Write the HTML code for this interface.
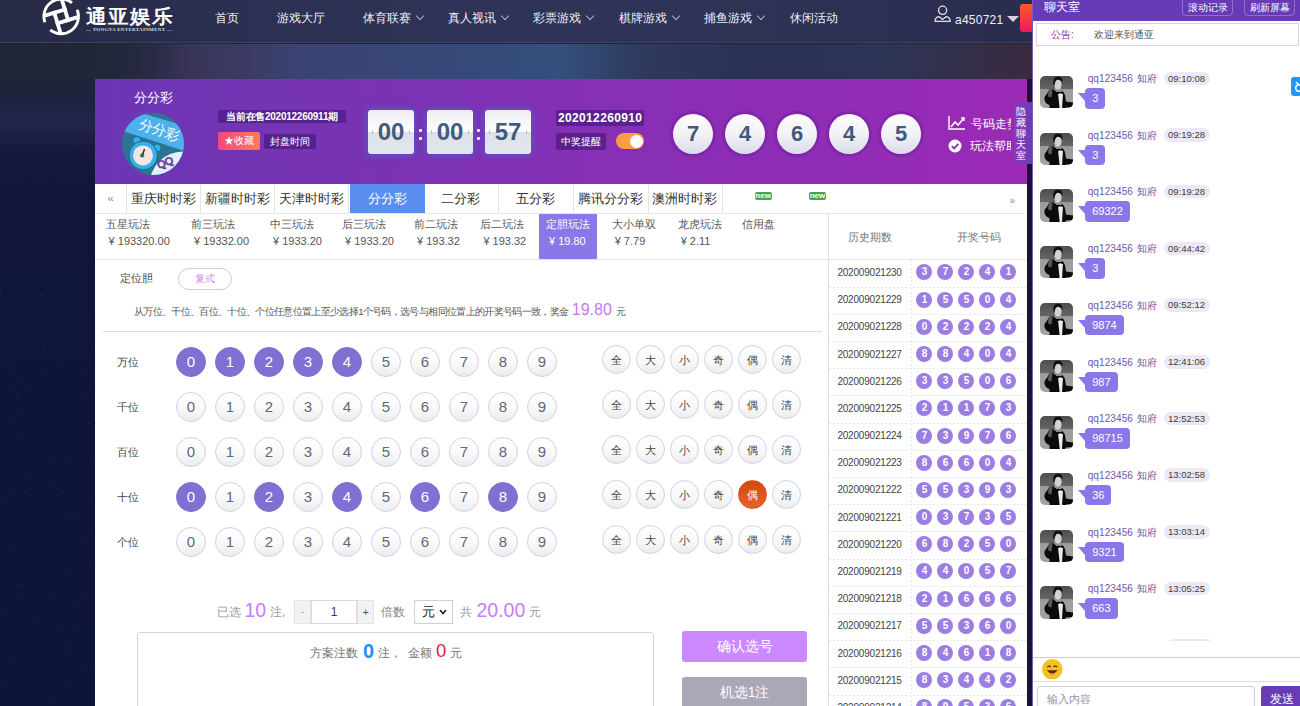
<!DOCTYPE html>
<html><head><meta charset="utf-8">
<style>
*{margin:0;padding:0;box-sizing:border-box}
html,body{width:1300px;height:706px;overflow:hidden}
body{position:relative;font-family:"Liberation Sans",sans-serif;background:#111640;color:#333}
.a{position:absolute}
#bg{left:0;top:43px;width:1032px;height:663px;background:linear-gradient(180deg,#1f2736 0px,#1f2638 30px,#1e2240 57px,#22264a 80px,#17193e 107px,#11153b 157px,#0f1539 357px,#0d1539 663px)}
#bgstrip{left:0;top:44px;width:1032px;height:35px;background:linear-gradient(90deg,#1f2736 0px,#202838 100px,#262a44 150px,#383456 185px,#3a3a62 240px,#3a4372 300px,#364878 450px,#34507c 560px,#2e3a5e 640px,#2a3152 760px,#2d3454 900px,#352d45 990px,#3b2a3e 1032px)}
#rstrip{left:1027px;top:79px;width:5px;height:627px;background:#1a1230}
#hdr{left:0;top:0;width:1032px;height:43px;background:linear-gradient(90deg,#262a45 0,#2b2f50 200px,#2e3357 450px,#2e3357 700px,#2b2d4d 1032px);border-bottom:1px solid #3b4064}
.nav{top:11px;font-size:12px;color:#eef0f8;line-height:14px;white-space:nowrap}
.chev{display:inline-block;width:6px;height:6px;border-right:1px solid #a9adc4;border-bottom:1px solid #a9adc4;transform:rotate(45deg);margin-left:6px;position:relative;top:-3px}
#panel{left:95px;top:79px;width:932px;height:627px;background:#fff}
#banner{left:0;top:0;width:932px;height:105px;background:linear-gradient(90deg,#6b36b4,#9b2ab5)}
.bdg{background:rgba(60,20,110,.55);color:#fff;font-size:10px;border-radius:2px;white-space:nowrap}
.cd{width:46px;height:44px;border-radius:3px;background:linear-gradient(180deg,#eeeef2 0,#fff 50%,#dde1ea 50%,#e2e6ee 100%);box-shadow:0 0 6px 2px rgba(70,110,200,.55);font-size:24px;font-weight:bold;color:#3f5b7e;text-align:center;line-height:44px}
.cd:before,.cd:after{content:"";position:absolute;top:20px;width:1px;height:4px;background:#b8bcc8}.cd:before{left:4px}.cd:after{right:4px}
.colon{width:3px;height:3px;background:#fff;border-radius:1px}
.ball{width:40px;height:40px;border-radius:50%;background:linear-gradient(180deg,#fdfdfe 0,#f2f2f7 50%,#dcdceb 100%);box-shadow:0 0 0 3px rgba(110,30,160,.45);font-size:22px;font-weight:bold;color:#3e5a7c;text-align:center;line-height:40px}
.tab{top:105px;height:29px;width:75.4px;border-right:1px solid #e4e4e4;font-size:13px;color:#333;text-align:center;line-height:29px;white-space:nowrap}
.sub{top:134px;height:46px;font-size:11px;color:#555;white-space:nowrap;line-height:17px}
.lab{font-size:11px;color:#444;line-height:14px;white-space:nowrap}
.nb{width:30px;height:30px;border-radius:50%;border:1px solid #cfd2e0;background:linear-gradient(180deg,#fff 0,#fafafa 50%,#ececef 100%);font-size:15px;color:#61677a;text-align:center;line-height:28px}
.nb.sel{background:#7f70d1;border-color:#7f70d1;color:#fff}
.qb{width:29px;height:29px;border-radius:50%;border:1px solid #cfd2e0;background:linear-gradient(180deg,#fff 0,#f8f8f8 60%,#ececef 100%);font-size:11px;color:#444;text-align:center;line-height:29.5px}
.qb.on{background:linear-gradient(180deg,#d24810,#e6622a);border-color:#d8521a;color:#fff}
.hl{left:0;width:198px;height:1px;background:repeating-linear-gradient(90deg,#e6e6e6 0 2px,transparent 2px 4px)}
.hp{left:8.4px;font-size:10px;color:#444;line-height:13px;letter-spacing:-.2px;white-space:nowrap}
.hb{width:16.1px;height:16.1px;border-radius:50%;background:#9c7de2;color:#fff;font-style:normal;font-weight:bold;font-size:10px;line-height:16.1px;text-align:center}
#chat{left:1032px;top:0;width:268px;height:706px;background:#fff;overflow:hidden}
#chat:after{content:"";position:absolute;left:0;top:0;width:1px;height:706px;background:#7b5cb5}
.cbtn{top:-3px;width:51px;height:18.7px;border:1px solid rgba(255,255,255,.28);border-radius:4px;color:#fff;font-size:10px;text-align:center;line-height:17px;padding-top:1px}
.av{left:8.4px;width:32.6px;height:32.4px;border-radius:5px;overflow:hidden}
.nm{left:55.7px;font-size:10px;color:#7058a8;line-height:12px;white-space:nowrap;letter-spacing:.1px}
.tm{left:131.5px;width:46px;height:13.5px;border-radius:7px;background:#ece8f6;font-size:9.5px;color:#3c3c3c;text-align:center;line-height:13.5px}
.bb{left:53.2px;height:20.6px;border-radius:4px;background:#8b77ea;color:#fff;font-size:11px;line-height:20.6px;padding:0 7px;white-space:nowrap}
.bb:before{content:"";position:absolute;left:-7px;top:5px;border-top:0 solid transparent;border-right:7px solid #8b77ea;border-bottom:8.5px solid transparent;width:0;height:0}
.bt{font-size:12px;line-height:14px;white-space:nowrap}
</style></head><body>
<div id="bg" class="a"></div>
<div id="bgstrip" class="a"></div>
<div id="rstrip" class="a"></div>
<div class="a" style="left:0;top:0;width:1px;height:1px;box-shadow:41px 294px 0 0 #2a386c,83px 189px 0 0 #1c2858,68px 236px 0 0 #243266,74px 199px 0 0 #1a2454,27px 178px 0 0 #1c2858,55px 568px 0 0 #1c2858,30px 232px 0 0 #1a2454,54px 200px 0 0 #1a2454,15px 368px 0 0 #1a2454,7px 546px 0 0 #1c2858,28px 187px 0 0 #1a2454,17px 436px 0 0 #2a386c,18px 693px 0 0 #1c2858,73px 455px 0 0 #1a2454,87px 325px 0 0 #1c2858,74px 332px 0 0 #243266,12px 700px 0 0 #1c2858,72px 201px 0 0 #1a2454,26px 648px 0 0 #1a2454,54px 461px 0 0 #2a386c,74px 604px 0 0 #243266,38px 394px 0 0 #202c5e,89px 389px 0 0 #1c2858,73px 447px 0 0 #1a2454,63px 491px 0 0 #2a386c,36px 214px 0 0 #1c2858,65px 568px 0 0 #202c5e,43px 295px 0 0 #2a386c,53px 180px 0 0 #1c2858,71px 461px 0 0 #243266,88px 498px 0 0 #1a2454,63px 607px 0 0 #1c2858,11px 416px 0 0 #2a386c,89px 206px 0 0 #1c2858,93px 457px 0 0 #1a2454,87px 596px 0 0 #243266,91px 535px 0 0 #243266,2px 612px 0 0 #243266,21px 259px 0 0 #2a386c,7px 363px 0 0 #243266,16px 393px 0 0 #2a386c,50px 648px 0 0 #1c2858,21px 599px 0 0 #2a386c,70px 424px 0 0 #202c5e,55px 703px 0 0 #243266,90px 565px 0 0 #243266,87px 529px 0 0 #202c5e,19px 224px 0 0 #202c5e,19px 377px 0 0 #202c5e,1px 636px 0 0 #1a2454,23px 409px 0 0 #243266,0px 289px 0 0 #2a386c,68px 518px 0 0 #1a2454,72px 466px 0 0 #202c5e,88px 667px 0 0 #1a2454,83px 195px 0 0 #2a386c,87px 541px 0 0 #2a386c,51px 543px 0 0 #1c2858,61px 550px 0 0 #1c2858,24px 208px 0 0 #202c5e,56px 306px 0 0 #1c2858,43px 193px 0 0 #1c2858,0px 294px 0 0 #1a2454,12px 512px 0 0 #1a2454,3px 212px 0 0 #202c5e,78px 525px 0 0 #202c5e,81px 398px 0 0 #243266,77px 512px 0 0 #2a386c,15px 258px 0 0 #2a386c,59px 631px 0 0 #2a386c,39px 227px 0 0 #202c5e,13px 490px 0 0 #243266,61px 305px 0 0 #1a2454,2px 350px 0 0 #1a2454,46px 290px 0 0 #1a2454,3px 680px 0 0 #243266,82px 233px 0 0 #243266,66px 515px 0 0 #202c5e,45px 368px 0 0 #1a2454,69px 654px 0 0 #243266,81px 368px 0 0 #1a2454,24px 385px 0 0 #2a386c,94px 372px 0 0 #202c5e,66px 644px 0 0 #243266,93px 169px 0 0 #1c2858,35px 623px 0 0 #243266,24px 492px 0 0 #2a386c,92px 497px 0 0 #243266,10px 365px 0 0 #1c2858,29px 621px 0 0 #202c5e,43px 349px 0 0 #2a386c,79px 141px 0 0 #2a386c,83px 492px 0 0 #1c2858,84px 262px 0 0 #2a386c,91px 344px 0 0 #2a386c,22px 584px 0 0 #243266,11px 545px 0 0 #2a386c,51px 226px 0 0 #202c5e,21px 270px 0 0 #1c2858,19px 616px 0 0 #202c5e,78px 625px 0 0 #243266,19px 701px 0 0 #1a2454,16px 161px 0 0 #1c2858,92px 245px 0 0 #1a2454,17px 584px 0 0 #202c5e,27px 168px 0 0 #243266,27px 439px 0 0 #1a2454,30px 473px 0 0 #243266,69px 569px 0 0 #202c5e,7px 502px 0 0 #2a386c,84px 669px 0 0 #2a386c,64px 273px 0 0 #1a2454,19px 676px 0 0 #1a2454,2px 590px 0 0 #202c5e,77px 144px 0 0 #202c5e,22px 284px 0 0 #2a386c,79px 263px 0 0 #1a2454,7px 473px 0 0 #1a2454,67px 634px 0 0 #1c2858,71px 198px 0 0 #202c5e,24px 423px 0 0 #1c2858,12px 659px 0 0 #2a386c,71px 168px 0 0 #1c2858,56px 473px 0 0 #1a2454,64px 664px 0 0 #202c5e,88px 423px 0 0 #2a386c,65px 686px 0 0 #2a386c,64px 393px 0 0 #1a2454,33px 347px 0 0 #2a386c,17px 566px 0 0 #1c2858,50px 592px 0 0 #243266,9px 386px 0 0 #2a386c,9px 357px 0 0 #243266,15px 298px 0 0 #243266,18px 399px 0 0 #202c5e,59px 364px 0 0 #1c2858,50px 638px 0 0 #202c5e,85px 369px 0 0 #202c5e,90px 581px 0 0 #1a2454,51px 487px 0 0 #2a386c"></div>
<div id="hdr" class="a">
  <svg class="a" style="left:38px;top:0" width="50" height="40" viewBox="0 0 50 40">
    <g stroke="#fff" fill="none" stroke-width="2.9">
    <path d="M6.94 22.32 A17.3 17.3 0 0 1 33.97 2.86"/>
    <path d="M39.19 9.81 A17.3 17.3 0 0 1 12.22 29.77"/>
    <g transform="translate(23.2 16.4) rotate(-17)" stroke-width="3.8">
      <path d="M-15.5 -5.5 L7.4 -5.5"/><path d="M5.5 -17 L5.5 7.4"/><path d="M-7.4 5.5 L15.5 5.5"/><path d="M-5.5 -7.4 L-5.5 17"/>
    </g></g>
  </svg>
  <div class="a" style="left:86px;top:4px;font-size:21px;font-weight:bold;color:#fff;letter-spacing:1px;line-height:24px;transform:scaleY(.92);transform-origin:0 100%">通亚娱乐</div>
  <div class="a" style="left:86px;top:27px;font-size:5px;color:#ddd;letter-spacing:.3px;font-family:'Liberation Serif',serif;font-weight:bold">— TONGYA ENTERTAINMENT —</div>
  <div class="a nav" style="left:215px">首页</div>
  <div class="a nav" style="left:277px">游戏大厅</div>
  <div class="a nav" style="left:363px">体育联赛<i class="chev"></i></div>
  <div class="a nav" style="left:448px">真人视讯<i class="chev"></i></div>
  <div class="a nav" style="left:533px">彩票游戏<i class="chev"></i></div>
  <div class="a nav" style="left:619px">棋牌游戏<i class="chev"></i></div>
  <div class="a nav" style="left:704px">捕鱼游戏<i class="chev"></i></div>
  <div class="a nav" style="left:790px">休闲活动</div>
  <svg class="a" style="left:934px;top:4px" width="18" height="19" viewBox="0 0 18 19"><circle cx="8.6" cy="6.3" r="4.1" stroke="#dfe2ee" stroke-width="1.3" fill="none"/><path d="M1 17.4 Q1 13.2 5 12.6 L8.6 15.4 L12.2 12.6 Q16.2 13.2 16.2 17.4 Z" stroke="#dfe2ee" stroke-width="1.3" fill="none" stroke-linejoin="round"/></svg>
  <div class="a" style="left:955px;top:12.5px;font-size:12px;letter-spacing:.25px;color:#eef0f8;line-height:14px">a450721</div>
  <div class="a" style="left:1007px;top:15.5px;width:0;height:0;border-left:6px solid transparent;border-right:6px solid transparent;border-top:6.8px solid #d4d4dc"></div>
  <div class="a" style="left:1020px;top:4px;width:20px;height:28px;border-radius:3px;background:linear-gradient(180deg,#ff5a1e,#ec1a5e)"></div>
</div>

<div id="panel" class="a">
  <div id="banner" class="a">
    <div class="a" style="left:39px;top:12px;font-size:12.5px;color:#fff;line-height:15px">分分彩</div>
    <div class="a" style="left:27.2px;top:33.5px;width:62px;height:62px;border-radius:50%;overflow:hidden;background:#2b7592">
      <svg width="62" height="62" viewBox="0 0 62 62">
        <rect width="62" height="62" fill="#2b7592"/>
        <polygon points="-2,-6 64,13 64,38.5 -2,17" fill="#4db1ee"/>
        <text x="0" y="0" font-size="14" fill="#fff" font-family="Liberation Sans" transform="translate(15.5 14.5) rotate(19)">分分彩</text>
        <circle cx="61" cy="72" r="33.5" fill="#e3f1fb"/>
        <text x="0" y="0" font-size="10.5" fill="none" stroke="#6b3a9a" stroke-width=".9" font-family="Liberation Sans" transform="translate(37 56) rotate(-22)">QQ</text>
        <circle cx="14.8" cy="27.5" r="4" fill="#36b0ea" stroke="#1d5f86" stroke-width=".8"/>
        <circle cx="35" cy="35" r="4" fill="#36b0ea" stroke="#1d5f86" stroke-width=".8"/>
        <circle cx="21.3" cy="42.4" r="14.3" fill="#36b0ea" stroke="#1d5f86" stroke-width=".9"/>
        <circle cx="21" cy="42.4" r="10" fill="#f2e6e2"/>
        <path d="M20.2 42.4 L22.6 36" stroke="#4a2020" stroke-width="1.5"/>
        <circle cx="20.2" cy="42.4" r="1.8" fill="#1e8a4a" stroke="#4a2020" stroke-width=".5"/>
      </svg>
    </div>
    <div class="a bdg" style="left:123px;top:31px;width:128px;height:13px;line-height:13px;padding-left:8px;font-weight:bold;letter-spacing:-.25px">当前在售202012260911期</div>
    <div class="a" style="left:123px;top:53px;width:42px;height:18px;border-radius:2px;background:linear-gradient(90deg,#f3497e,#fe7a58);color:#fff;font-size:10px;line-height:18px;padding-left:6px;white-space:nowrap">★收藏</div>
    <div class="a bdg" style="left:169px;top:55px;width:52px;height:15px;line-height:15px;text-align:center">封盘时间</div>
    <div class="a cd" style="left:273px;top:31px">00</div>
    <div class="a colon" style="left:323.5px;top:50px"></div><div class="a colon" style="left:323.5px;top:58px"></div>
    <div class="a cd" style="left:332px;top:31px">00</div>
    <div class="a colon" style="left:381.5px;top:50px"></div><div class="a colon" style="left:381.5px;top:58px"></div>
    <div class="a cd" style="left:390px;top:31px">57</div>
    <div class="a bdg" style="left:461px;top:31px;width:88px;height:16px;line-height:16px;font-size:12px;font-weight:bold;padding-left:2px;letter-spacing:.35px">202012260910</div>
    <div class="a bdg" style="left:461px;top:54px;width:50px;height:17px;line-height:17px;text-align:center">中奖提醒</div>
    <div class="a" style="left:521px;top:54px;width:28px;height:16px;border-radius:8px;background:linear-gradient(90deg,#f99a4a,#ffa43a)"><div class="a" style="right:1px;top:1.5px;width:13px;height:13px;border-radius:50%;background:#fff"></div></div>
    <div class="a ball" style="left:578px;top:35px">7</div>
    <div class="a ball" style="left:630px;top:35px">4</div>
    <div class="a ball" style="left:682px;top:35px">6</div>
    <div class="a ball" style="left:734px;top:35px">4</div>
    <div class="a ball" style="left:786px;top:35px">5</div>
    <svg class="a" style="left:853px;top:37px" width="18" height="14" viewBox="0 0 18 14"><path d="M1 0 V13 H17" stroke="#fff" stroke-width="1.4" fill="none"/><path d="M3 11 L7 6 L10 9 L16 2" stroke="#fff" stroke-width="1.6" fill="none"/><path d="M13 2 H16 V5" stroke="#fff" stroke-width="1.4" fill="none"/></svg>
    <div class="a" style="left:876px;top:38px;font-size:12px;color:#fff;line-height:14px;white-space:nowrap;width:40px;overflow:hidden">号码走势</div>
    <svg class="a" style="left:853px;top:60px" width="14" height="14" viewBox="0 0 14 14"><circle cx="7" cy="7" r="6.5" fill="#fff"/><path d="M3.8 7.2 L6.2 9.4 L10.3 4.8" stroke="#8a2eb4" stroke-width="1.8" fill="none"/></svg>
    <div class="a" style="left:875px;top:60px;font-size:12px;color:#fff;line-height:14px;white-space:nowrap;width:41px;overflow:hidden">玩法帮助</div>
    <div class="a" style="left:919px;top:23px;width:18px;height:62px;background:linear-gradient(90deg,#8a3ab8,#6a3db5);color:#fff;font-size:10px;line-height:11px;text-align:left;padding-top:3.5px;padding-left:1.5px;width:18px">隐<br>藏<br>聊<br>天<br>室</div>
  </div>
  <!-- tabs -->
  <div class="a" style="left:0;top:105px;width:930px;height:30px;border-bottom:1px solid #e6e6e6"></div>
  <div class="a tab" style="left:0;width:32px;color:#9a7cc8;font-size:11px">«</div>
  <div class="a tab" style="left:31px">重庆时时彩</div>
  <div class="a tab" style="left:105px">新疆时时彩</div>
  <div class="a tab" style="left:179px">天津时时彩</div>
  <div class="a tab" style="left:254.6px;background:#5b8ef0;color:#fff;border-right:none">分分彩</div>
  <div class="a tab" style="left:328.7px">二分彩</div>
  <div class="a tab" style="left:403.7px">五分彩</div>
  <div class="a tab" style="left:478.3px">腾讯分分彩</div>
  <div class="a tab" style="left:552.7px">澳洲时时彩</div>
  <div class="a" style="left:659.6px;top:113px;width:17px;height:8px;background:#41a847;border-radius:2px;color:#fff;font-size:8px;line-height:8px;text-align:center;font-weight:bold">new</div>
  <div class="a" style="left:714px;top:113px;width:17px;height:8px;background:#41a847;border-radius:2px;color:#fff;font-size:8px;line-height:8px;text-align:center;font-weight:bold">new</div>
  <div class="a" style="left:914.5px;top:116px;font-size:10px;color:#9a7cc8">»</div>
  <!-- sub tabs -->
  <div class="a" style="left:0;top:135px;width:733px;height:46px;border-bottom:1px solid #e6e6e6"></div>
  <div class="a" style="left:443.7px;top:135px;width:58.6px;height:45px;background:#8b78e8"></div>
  <div class="a sub" style="left:10.6px;top:136.5px">五星玩法<br><span style="padding-left:3px">¥ 193320.00</span></div>
  <div class="a sub" style="left:96px;top:136.5px">前三玩法<br><span style="padding-left:3px">¥ 19332.00</span></div>
  <div class="a sub" style="left:175px;top:136.5px">中三玩法<br><span style="padding-left:3px">¥ 1933.20</span></div>
  <div class="a sub" style="left:247px;top:136.5px">后三玩法<br><span style="padding-left:3px">¥ 1933.20</span></div>
  <div class="a sub" style="left:319px;top:136.5px">前二玩法<br><span style="padding-left:3px">¥ 193.32</span></div>
  <div class="a sub" style="left:385.4px;top:136.5px">后二玩法<br><span style="padding-left:3px">¥ 193.32</span></div>
  <div class="a sub" style="left:451px;top:136.5px;color:#fff">定胆玩法<br><span style="padding-left:3px">¥ 19.80</span></div>
  <div class="a sub" style="left:516.7px;top:136.5px">大小单双<br><span style="padding-left:3px">¥ 7.79</span></div>
  <div class="a sub" style="left:582.7px;top:136.5px">龙虎玩法<br><span style="padding-left:3px">¥ 2.11</span></div>
  <div class="a sub" style="left:647px;top:136.5px">信用盘</div>
  <!-- play area -->
  <div class="a lab" style="left:25px;top:192px">定位胆</div>
  <div class="a" style="left:83px;top:189px;width:54px;height:21.6px;border:1px solid #cfcfcf;border-radius:11px;font-size:10px;color:#c77dff;text-align:center;line-height:19.6px">复式</div>
  <div class="a" style="left:39px;top:224px;font-size:9.5px;letter-spacing:-.66px;color:#555;line-height:14px;white-space:nowrap">从万位、千位、百位、十位、个位任意位置上至少选择1个号码，选号与相同位置上的开奖号码一致，奖金<span style="font-size:16px;color:#c27af5;letter-spacing:0;margin:0 4px 0 3.5px">19.80</span>元</div>
  <div class="a" style="left:8px;top:252px;width:719px;height:1px;background:#dcdce0"></div>
<div class="a lab" style="left:22px;top:276px">万位</div>
<div class="a nb sel" style="left:81px;top:268px">0</div>
<div class="a nb sel" style="left:120px;top:268px">1</div>
<div class="a nb sel" style="left:159px;top:268px">2</div>
<div class="a nb sel" style="left:198px;top:268px">3</div>
<div class="a nb sel" style="left:237px;top:268px">4</div>
<div class="a nb" style="left:276px;top:268px">5</div>
<div class="a nb" style="left:315px;top:268px">6</div>
<div class="a nb" style="left:354px;top:268px">7</div>
<div class="a nb" style="left:393px;top:268px">8</div>
<div class="a nb" style="left:432px;top:268px">9</div>
<div class="a qb" style="left:506.6px;top:266px">全</div>
<div class="a qb" style="left:540.7px;top:266px">大</div>
<div class="a qb" style="left:574.8px;top:266px">小</div>
<div class="a qb" style="left:608.9px;top:266px">奇</div>
<div class="a qb" style="left:643.0px;top:266px">偶</div>
<div class="a qb" style="left:677.1px;top:266px">清</div>
<div class="a lab" style="left:22px;top:321px">千位</div>
<div class="a nb" style="left:81px;top:313px">0</div>
<div class="a nb" style="left:120px;top:313px">1</div>
<div class="a nb" style="left:159px;top:313px">2</div>
<div class="a nb" style="left:198px;top:313px">3</div>
<div class="a nb" style="left:237px;top:313px">4</div>
<div class="a nb" style="left:276px;top:313px">5</div>
<div class="a nb" style="left:315px;top:313px">6</div>
<div class="a nb" style="left:354px;top:313px">7</div>
<div class="a nb" style="left:393px;top:313px">8</div>
<div class="a nb" style="left:432px;top:313px">9</div>
<div class="a qb" style="left:506.6px;top:311px">全</div>
<div class="a qb" style="left:540.7px;top:311px">大</div>
<div class="a qb" style="left:574.8px;top:311px">小</div>
<div class="a qb" style="left:608.9px;top:311px">奇</div>
<div class="a qb" style="left:643.0px;top:311px">偶</div>
<div class="a qb" style="left:677.1px;top:311px">清</div>
<div class="a lab" style="left:22px;top:366px">百位</div>
<div class="a nb" style="left:81px;top:358px">0</div>
<div class="a nb" style="left:120px;top:358px">1</div>
<div class="a nb" style="left:159px;top:358px">2</div>
<div class="a nb" style="left:198px;top:358px">3</div>
<div class="a nb" style="left:237px;top:358px">4</div>
<div class="a nb" style="left:276px;top:358px">5</div>
<div class="a nb" style="left:315px;top:358px">6</div>
<div class="a nb" style="left:354px;top:358px">7</div>
<div class="a nb" style="left:393px;top:358px">8</div>
<div class="a nb" style="left:432px;top:358px">9</div>
<div class="a qb" style="left:506.6px;top:356px">全</div>
<div class="a qb" style="left:540.7px;top:356px">大</div>
<div class="a qb" style="left:574.8px;top:356px">小</div>
<div class="a qb" style="left:608.9px;top:356px">奇</div>
<div class="a qb" style="left:643.0px;top:356px">偶</div>
<div class="a qb" style="left:677.1px;top:356px">清</div>
<div class="a lab" style="left:22px;top:411px">十位</div>
<div class="a nb sel" style="left:81px;top:403px">0</div>
<div class="a nb" style="left:120px;top:403px">1</div>
<div class="a nb sel" style="left:159px;top:403px">2</div>
<div class="a nb" style="left:198px;top:403px">3</div>
<div class="a nb sel" style="left:237px;top:403px">4</div>
<div class="a nb" style="left:276px;top:403px">5</div>
<div class="a nb sel" style="left:315px;top:403px">6</div>
<div class="a nb" style="left:354px;top:403px">7</div>
<div class="a nb sel" style="left:393px;top:403px">8</div>
<div class="a nb" style="left:432px;top:403px">9</div>
<div class="a qb" style="left:506.6px;top:401px">全</div>
<div class="a qb" style="left:540.7px;top:401px">大</div>
<div class="a qb" style="left:574.8px;top:401px">小</div>
<div class="a qb" style="left:608.9px;top:401px">奇</div>
<div class="a qb on" style="left:643.0px;top:401px">偶</div>
<div class="a qb" style="left:677.1px;top:401px">清</div>
<div class="a lab" style="left:22px;top:456px">个位</div>
<div class="a nb" style="left:81px;top:448px">0</div>
<div class="a nb" style="left:120px;top:448px">1</div>
<div class="a nb" style="left:159px;top:448px">2</div>
<div class="a nb" style="left:198px;top:448px">3</div>
<div class="a nb" style="left:237px;top:448px">4</div>
<div class="a nb" style="left:276px;top:448px">5</div>
<div class="a nb" style="left:315px;top:448px">6</div>
<div class="a nb" style="left:354px;top:448px">7</div>
<div class="a nb" style="left:393px;top:448px">8</div>
<div class="a nb" style="left:432px;top:448px">9</div>
<div class="a qb" style="left:506.6px;top:446px">全</div>
<div class="a qb" style="left:540.7px;top:446px">大</div>
<div class="a qb" style="left:574.8px;top:446px">小</div>
<div class="a qb" style="left:608.9px;top:446px">奇</div>
<div class="a qb" style="left:643.0px;top:446px">偶</div>
<div class="a qb" style="left:677.1px;top:446px">清</div>
  <!-- bottom -->
  <div class="a bt" style="left:121.5px;top:526px;color:#999">已选</div>
  <div class="a" style="left:149.5px;top:520px;font-size:19.5px;line-height:22px;color:#c77dff">10</div>
  <div class="a bt" style="left:175px;top:526px;color:#999">注,</div>
  <div class="a" style="left:199px;top:521px;width:17px;height:24px;background:#f2f2f2;border:1px solid #e3e3e3;color:#aaa;font-size:10px;text-align:center;line-height:22px">-</div>
  <div class="a" style="left:215.8px;top:521px;width:46.5px;height:24px;background:#fff;border:1px solid #d9d9d9;color:#444;font-size:12px;text-align:center;line-height:22px">1</div>
  <div class="a" style="left:262.3px;top:521px;width:17px;height:24px;background:#f2f2f2;border:1px solid #e3e3e3;color:#555;font-size:11px;text-align:center;line-height:22px">+</div>
  <div class="a bt" style="left:286px;top:526px;color:#888">倍数</div>
  <div class="a" style="left:319px;top:521px;width:38.6px;height:24px;border:1px solid #cfcfcf;background:#fff;font-size:13px;color:#222;line-height:22px;padding-left:7px">元<svg class="a" style="right:5px;top:8px" width="8" height="6" viewBox="0 0 8 6"><path d="M1 1 L4 4.5 L7 1" stroke="#222" stroke-width="1.6" fill="none"/></svg></div>
  <div class="a bt" style="left:364.8px;top:526px;color:#999">共</div>
  <div class="a" style="left:381.5px;top:520px;font-size:19.5px;line-height:22px;color:#c77dff">20.00</div>
  <div class="a bt" style="left:433.5px;top:526px;color:#999">元</div>
  <div class="a" style="left:42.3px;top:553.4px;width:516.5px;height:100px;border:1px solid #d5d5d5;border-radius:3px"></div>
  <div class="a bt" style="left:214.7px;top:567px;color:#777">方案注数</div>
  <div class="a" style="left:268px;top:561px;font-size:20px;font-weight:bold;line-height:22px;color:#1e90ff">0</div>
  <div class="a bt" style="left:283px;top:567px;color:#777">注，</div>
  <div class="a bt" style="left:312.5px;top:567px;color:#777">金额</div>
  <div class="a" style="left:341px;top:561px;font-size:18.5px;line-height:22px;color:#e8174d">0</div>
  <div class="a bt" style="left:355px;top:567px;color:#777">元</div>
  <div class="a" style="left:587.4px;top:552.4px;width:124.3px;height:31px;border-radius:3px;background:#cc88fe;color:#fff;font-size:14px;text-align:center;line-height:31px">确认选号</div>
  <div class="a" style="left:587.4px;top:597.7px;width:124.3px;height:31px;border-radius:3px;background:#aaa7b8;color:#fff;font-size:14px;text-align:center;line-height:31px">机选1注</div>
  <!-- history -->
  <div class="a" style="left:733px;top:135px;width:199px;height:492px;border-left:1px solid #e2e2e2;overflow:hidden">
    <div class="a" style="left:19px;top:16px;font-size:11px;color:#777;line-height:14px">历史期数</div>
    <div class="a" style="left:128px;top:16px;font-size:11px;color:#777;line-height:14px">开奖号码</div>
    <div class="a" style="left:0;top:45px;width:198px;height:1px;background:#e4e4e4"></div>
    <div class="a" style="left:82px;top:46px;width:1px;height:460px;background:repeating-linear-gradient(180deg,#e6e6e6 0 2px,transparent 2px 4px)"></div>
    <div class="a hl" style="top:72.6px"></div>
<span class="a hp" style="top:51.9px">202009021230</span>
<i class="a hb" style="left:87.4px;top:50.3px">3</i>
<i class="a hb" style="left:108.4px;top:50.3px">7</i>
<i class="a hb" style="left:129.4px;top:50.3px">2</i>
<i class="a hb" style="left:150.4px;top:50.3px">4</i>
<i class="a hb" style="left:171.4px;top:50.3px">1</i>
<div class="a hl" style="top:99.8px"></div>
<span class="a hp" style="top:79.1px">202009021229</span>
<i class="a hb" style="left:87.4px;top:77.5px">1</i>
<i class="a hb" style="left:108.4px;top:77.5px">5</i>
<i class="a hb" style="left:129.4px;top:77.5px">5</i>
<i class="a hb" style="left:150.4px;top:77.5px">0</i>
<i class="a hb" style="left:171.4px;top:77.5px">4</i>
<div class="a hl" style="top:127.0px"></div>
<span class="a hp" style="top:106.3px">202009021228</span>
<i class="a hb" style="left:87.4px;top:104.7px">0</i>
<i class="a hb" style="left:108.4px;top:104.7px">2</i>
<i class="a hb" style="left:129.4px;top:104.7px">2</i>
<i class="a hb" style="left:150.4px;top:104.7px">2</i>
<i class="a hb" style="left:171.4px;top:104.7px">4</i>
<div class="a hl" style="top:154.2px"></div>
<span class="a hp" style="top:133.5px">202009021227</span>
<i class="a hb" style="left:87.4px;top:131.9px">8</i>
<i class="a hb" style="left:108.4px;top:131.9px">8</i>
<i class="a hb" style="left:129.4px;top:131.9px">4</i>
<i class="a hb" style="left:150.4px;top:131.9px">0</i>
<i class="a hb" style="left:171.4px;top:131.9px">4</i>
<div class="a hl" style="top:181.4px"></div>
<span class="a hp" style="top:160.7px">202009021226</span>
<i class="a hb" style="left:87.4px;top:159.1px">3</i>
<i class="a hb" style="left:108.4px;top:159.1px">3</i>
<i class="a hb" style="left:129.4px;top:159.1px">5</i>
<i class="a hb" style="left:150.4px;top:159.1px">0</i>
<i class="a hb" style="left:171.4px;top:159.1px">6</i>
<div class="a hl" style="top:208.6px"></div>
<span class="a hp" style="top:187.9px">202009021225</span>
<i class="a hb" style="left:87.4px;top:186.3px">2</i>
<i class="a hb" style="left:108.4px;top:186.3px">1</i>
<i class="a hb" style="left:129.4px;top:186.3px">1</i>
<i class="a hb" style="left:150.4px;top:186.3px">7</i>
<i class="a hb" style="left:171.4px;top:186.3px">3</i>
<div class="a hl" style="top:235.7px"></div>
<span class="a hp" style="top:215.0px">202009021224</span>
<i class="a hb" style="left:87.4px;top:213.5px">7</i>
<i class="a hb" style="left:108.4px;top:213.5px">3</i>
<i class="a hb" style="left:129.4px;top:213.5px">9</i>
<i class="a hb" style="left:150.4px;top:213.5px">7</i>
<i class="a hb" style="left:171.4px;top:213.5px">6</i>
<div class="a hl" style="top:262.9px"></div>
<span class="a hp" style="top:242.2px">202009021223</span>
<i class="a hb" style="left:87.4px;top:240.7px">8</i>
<i class="a hb" style="left:108.4px;top:240.7px">6</i>
<i class="a hb" style="left:129.4px;top:240.7px">6</i>
<i class="a hb" style="left:150.4px;top:240.7px">0</i>
<i class="a hb" style="left:171.4px;top:240.7px">4</i>
<div class="a hl" style="top:290.1px"></div>
<span class="a hp" style="top:269.4px">202009021222</span>
<i class="a hb" style="left:87.4px;top:267.9px">5</i>
<i class="a hb" style="left:108.4px;top:267.9px">5</i>
<i class="a hb" style="left:129.4px;top:267.9px">3</i>
<i class="a hb" style="left:150.4px;top:267.9px">9</i>
<i class="a hb" style="left:171.4px;top:267.9px">3</i>
<div class="a hl" style="top:317.3px"></div>
<span class="a hp" style="top:296.6px">202009021221</span>
<i class="a hb" style="left:87.4px;top:295.1px">0</i>
<i class="a hb" style="left:108.4px;top:295.1px">3</i>
<i class="a hb" style="left:129.4px;top:295.1px">7</i>
<i class="a hb" style="left:150.4px;top:295.1px">3</i>
<i class="a hb" style="left:171.4px;top:295.1px">5</i>
<div class="a hl" style="top:344.5px"></div>
<span class="a hp" style="top:323.8px">202009021220</span>
<i class="a hb" style="left:87.4px;top:322.2px">6</i>
<i class="a hb" style="left:108.4px;top:322.2px">8</i>
<i class="a hb" style="left:129.4px;top:322.2px">2</i>
<i class="a hb" style="left:150.4px;top:322.2px">5</i>
<i class="a hb" style="left:171.4px;top:322.2px">0</i>
<div class="a hl" style="top:371.7px"></div>
<span class="a hp" style="top:351.0px">202009021219</span>
<i class="a hb" style="left:87.4px;top:349.4px">4</i>
<i class="a hb" style="left:108.4px;top:349.4px">4</i>
<i class="a hb" style="left:129.4px;top:349.4px">0</i>
<i class="a hb" style="left:150.4px;top:349.4px">5</i>
<i class="a hb" style="left:171.4px;top:349.4px">7</i>
<div class="a hl" style="top:398.9px"></div>
<span class="a hp" style="top:378.2px">202009021218</span>
<i class="a hb" style="left:87.4px;top:376.6px">2</i>
<i class="a hb" style="left:108.4px;top:376.6px">1</i>
<i class="a hb" style="left:129.4px;top:376.6px">6</i>
<i class="a hb" style="left:150.4px;top:376.6px">6</i>
<i class="a hb" style="left:171.4px;top:376.6px">6</i>
<div class="a hl" style="top:426.1px"></div>
<span class="a hp" style="top:405.4px">202009021217</span>
<i class="a hb" style="left:87.4px;top:403.8px">5</i>
<i class="a hb" style="left:108.4px;top:403.8px">5</i>
<i class="a hb" style="left:129.4px;top:403.8px">3</i>
<i class="a hb" style="left:150.4px;top:403.8px">6</i>
<i class="a hb" style="left:171.4px;top:403.8px">0</i>
<div class="a hl" style="top:453.3px"></div>
<span class="a hp" style="top:432.6px">202009021216</span>
<i class="a hb" style="left:87.4px;top:431.0px">8</i>
<i class="a hb" style="left:108.4px;top:431.0px">4</i>
<i class="a hb" style="left:129.4px;top:431.0px">6</i>
<i class="a hb" style="left:150.4px;top:431.0px">1</i>
<i class="a hb" style="left:171.4px;top:431.0px">8</i>
<div class="a hl" style="top:480.5px"></div>
<span class="a hp" style="top:459.8px">202009021215</span>
<i class="a hb" style="left:87.4px;top:458.2px">8</i>
<i class="a hb" style="left:108.4px;top:458.2px">3</i>
<i class="a hb" style="left:129.4px;top:458.2px">4</i>
<i class="a hb" style="left:150.4px;top:458.2px">4</i>
<i class="a hb" style="left:171.4px;top:458.2px">2</i>
<div class="a hl" style="top:507.6px"></div>
<span class="a hp" style="top:486.9px">202009021214</span>
<i class="a hb" style="left:87.4px;top:485.4px">8</i>
<i class="a hb" style="left:108.4px;top:485.4px">9</i>
<i class="a hb" style="left:129.4px;top:485.4px">5</i>
<i class="a hb" style="left:150.4px;top:485.4px">3</i>
<i class="a hb" style="left:171.4px;top:485.4px">6</i>
  </div>
</div>
<div id="chat" class="a">
<div class="a" style="left:0;top:0;width:268px;height:20.5px;background:#673ab7"></div>
<div class="a" style="left:11.5px;top:0px;font-size:11.8px;color:#fff;line-height:14px">聊天室</div>
<div class="a cbtn" style="left:150px">滚动记录</div>
<div class="a cbtn" style="left:212px">刷新屏幕</div>
<div class="a" style="left:4px;top:23px;width:263px;height:22.5px;border:1px solid #d9d3e3"></div>
<div class="a" style="left:19px;top:28px;font-size:10px;color:#9c27b0;line-height:13px">公告:</div>
<div class="a" style="left:61.5px;top:28px;font-size:10px;color:#555;line-height:13px">欢迎来到通亚</div>
<div class="a av" style="top:76.0px"><svg width="33" height="33" viewBox="0 0 33 33"><defs><linearGradient id="ag" x1="0" y1="0" x2="0" y2="1"><stop offset="0" stop-color="#4e4e4e"/><stop offset=".4" stop-color="#666"/><stop offset=".41" stop-color="#9c9c9c"/><stop offset="1" stop-color="#a4a4a4"/></linearGradient></defs><rect width="33" height="33" fill="url(#ag)"/><path d="M4.5 24 Q4 20 6.5 18.5 L9.5 13.5 L13 13 L15.5 15 L23 15.5 L25 19 L26 25.5 L33 26.5 L33 31 L26 31.5 L25 33 L9.5 33 L9.5 29 Q5.5 28 4.5 24 Z" fill="#0b0b0b"/><path d="M8 20.5 L8.5 15 Q9.5 11 11.5 12 L12.5 14 L11.5 21.5 Z" fill="#5a5a5a"/><path d="M15.8 12 L21 12 L21.5 16 L16 16 Z" fill="#8e8e8e"/><ellipse cx="17.9" cy="8.6" rx="3.7" ry="5.1" fill="#d2d2d2"/><path d="M13.6 9.5 Q12 0.8 17.7 0.5 Q23.4 0.6 22.6 7.5 Q21.6 3.8 17.7 3.8 Q15 4.2 14.6 9.5 Z" fill="#111"/><path d="M18 17 L23 17 L22 33 L19.7 33 Z" fill="#ececec"/><path d="M17.5 15.6 L20.2 16.8 L23 15.4 L23 18 L20.2 17.2 L17.5 18.2 Z" fill="#000"/></svg></div>
<div class="a nm" style="top:73.0px">qq123456 <span style="margin-left:1.5px">知府</span></div>
<div class="a tm" style="top:71.5px">09:10:08</div>
<div class="a bb" style="top:88.0px">3</div>
<div class="a av" style="top:132.7px"><svg width="33" height="33" viewBox="0 0 33 33"><defs><linearGradient id="ag" x1="0" y1="0" x2="0" y2="1"><stop offset="0" stop-color="#4e4e4e"/><stop offset=".4" stop-color="#666"/><stop offset=".41" stop-color="#9c9c9c"/><stop offset="1" stop-color="#a4a4a4"/></linearGradient></defs><rect width="33" height="33" fill="url(#ag)"/><path d="M4.5 24 Q4 20 6.5 18.5 L9.5 13.5 L13 13 L15.5 15 L23 15.5 L25 19 L26 25.5 L33 26.5 L33 31 L26 31.5 L25 33 L9.5 33 L9.5 29 Q5.5 28 4.5 24 Z" fill="#0b0b0b"/><path d="M8 20.5 L8.5 15 Q9.5 11 11.5 12 L12.5 14 L11.5 21.5 Z" fill="#5a5a5a"/><path d="M15.8 12 L21 12 L21.5 16 L16 16 Z" fill="#8e8e8e"/><ellipse cx="17.9" cy="8.6" rx="3.7" ry="5.1" fill="#d2d2d2"/><path d="M13.6 9.5 Q12 0.8 17.7 0.5 Q23.4 0.6 22.6 7.5 Q21.6 3.8 17.7 3.8 Q15 4.2 14.6 9.5 Z" fill="#111"/><path d="M18 17 L23 17 L22 33 L19.7 33 Z" fill="#ececec"/><path d="M17.5 15.6 L20.2 16.8 L23 15.4 L23 18 L20.2 17.2 L17.5 18.2 Z" fill="#000"/></svg></div>
<div class="a nm" style="top:129.7px">qq123456 <span style="margin-left:1.5px">知府</span></div>
<div class="a tm" style="top:128.2px">09:19:28</div>
<div class="a bb" style="top:144.7px">3</div>
<div class="a av" style="top:189.4px"><svg width="33" height="33" viewBox="0 0 33 33"><defs><linearGradient id="ag" x1="0" y1="0" x2="0" y2="1"><stop offset="0" stop-color="#4e4e4e"/><stop offset=".4" stop-color="#666"/><stop offset=".41" stop-color="#9c9c9c"/><stop offset="1" stop-color="#a4a4a4"/></linearGradient></defs><rect width="33" height="33" fill="url(#ag)"/><path d="M4.5 24 Q4 20 6.5 18.5 L9.5 13.5 L13 13 L15.5 15 L23 15.5 L25 19 L26 25.5 L33 26.5 L33 31 L26 31.5 L25 33 L9.5 33 L9.5 29 Q5.5 28 4.5 24 Z" fill="#0b0b0b"/><path d="M8 20.5 L8.5 15 Q9.5 11 11.5 12 L12.5 14 L11.5 21.5 Z" fill="#5a5a5a"/><path d="M15.8 12 L21 12 L21.5 16 L16 16 Z" fill="#8e8e8e"/><ellipse cx="17.9" cy="8.6" rx="3.7" ry="5.1" fill="#d2d2d2"/><path d="M13.6 9.5 Q12 0.8 17.7 0.5 Q23.4 0.6 22.6 7.5 Q21.6 3.8 17.7 3.8 Q15 4.2 14.6 9.5 Z" fill="#111"/><path d="M18 17 L23 17 L22 33 L19.7 33 Z" fill="#ececec"/><path d="M17.5 15.6 L20.2 16.8 L23 15.4 L23 18 L20.2 17.2 L17.5 18.2 Z" fill="#000"/></svg></div>
<div class="a nm" style="top:186.4px">qq123456 <span style="margin-left:1.5px">知府</span></div>
<div class="a tm" style="top:184.9px">09:19:28</div>
<div class="a bb" style="top:201.4px">69322</div>
<div class="a av" style="top:246.1px"><svg width="33" height="33" viewBox="0 0 33 33"><defs><linearGradient id="ag" x1="0" y1="0" x2="0" y2="1"><stop offset="0" stop-color="#4e4e4e"/><stop offset=".4" stop-color="#666"/><stop offset=".41" stop-color="#9c9c9c"/><stop offset="1" stop-color="#a4a4a4"/></linearGradient></defs><rect width="33" height="33" fill="url(#ag)"/><path d="M4.5 24 Q4 20 6.5 18.5 L9.5 13.5 L13 13 L15.5 15 L23 15.5 L25 19 L26 25.5 L33 26.5 L33 31 L26 31.5 L25 33 L9.5 33 L9.5 29 Q5.5 28 4.5 24 Z" fill="#0b0b0b"/><path d="M8 20.5 L8.5 15 Q9.5 11 11.5 12 L12.5 14 L11.5 21.5 Z" fill="#5a5a5a"/><path d="M15.8 12 L21 12 L21.5 16 L16 16 Z" fill="#8e8e8e"/><ellipse cx="17.9" cy="8.6" rx="3.7" ry="5.1" fill="#d2d2d2"/><path d="M13.6 9.5 Q12 0.8 17.7 0.5 Q23.4 0.6 22.6 7.5 Q21.6 3.8 17.7 3.8 Q15 4.2 14.6 9.5 Z" fill="#111"/><path d="M18 17 L23 17 L22 33 L19.7 33 Z" fill="#ececec"/><path d="M17.5 15.6 L20.2 16.8 L23 15.4 L23 18 L20.2 17.2 L17.5 18.2 Z" fill="#000"/></svg></div>
<div class="a nm" style="top:243.1px">qq123456 <span style="margin-left:1.5px">知府</span></div>
<div class="a tm" style="top:241.6px">09:44:42</div>
<div class="a bb" style="top:258.1px">3</div>
<div class="a av" style="top:302.8px"><svg width="33" height="33" viewBox="0 0 33 33"><defs><linearGradient id="ag" x1="0" y1="0" x2="0" y2="1"><stop offset="0" stop-color="#4e4e4e"/><stop offset=".4" stop-color="#666"/><stop offset=".41" stop-color="#9c9c9c"/><stop offset="1" stop-color="#a4a4a4"/></linearGradient></defs><rect width="33" height="33" fill="url(#ag)"/><path d="M4.5 24 Q4 20 6.5 18.5 L9.5 13.5 L13 13 L15.5 15 L23 15.5 L25 19 L26 25.5 L33 26.5 L33 31 L26 31.5 L25 33 L9.5 33 L9.5 29 Q5.5 28 4.5 24 Z" fill="#0b0b0b"/><path d="M8 20.5 L8.5 15 Q9.5 11 11.5 12 L12.5 14 L11.5 21.5 Z" fill="#5a5a5a"/><path d="M15.8 12 L21 12 L21.5 16 L16 16 Z" fill="#8e8e8e"/><ellipse cx="17.9" cy="8.6" rx="3.7" ry="5.1" fill="#d2d2d2"/><path d="M13.6 9.5 Q12 0.8 17.7 0.5 Q23.4 0.6 22.6 7.5 Q21.6 3.8 17.7 3.8 Q15 4.2 14.6 9.5 Z" fill="#111"/><path d="M18 17 L23 17 L22 33 L19.7 33 Z" fill="#ececec"/><path d="M17.5 15.6 L20.2 16.8 L23 15.4 L23 18 L20.2 17.2 L17.5 18.2 Z" fill="#000"/></svg></div>
<div class="a nm" style="top:299.8px">qq123456 <span style="margin-left:1.5px">知府</span></div>
<div class="a tm" style="top:298.3px">09:52:12</div>
<div class="a bb" style="top:314.8px">9874</div>
<div class="a av" style="top:359.5px"><svg width="33" height="33" viewBox="0 0 33 33"><defs><linearGradient id="ag" x1="0" y1="0" x2="0" y2="1"><stop offset="0" stop-color="#4e4e4e"/><stop offset=".4" stop-color="#666"/><stop offset=".41" stop-color="#9c9c9c"/><stop offset="1" stop-color="#a4a4a4"/></linearGradient></defs><rect width="33" height="33" fill="url(#ag)"/><path d="M4.5 24 Q4 20 6.5 18.5 L9.5 13.5 L13 13 L15.5 15 L23 15.5 L25 19 L26 25.5 L33 26.5 L33 31 L26 31.5 L25 33 L9.5 33 L9.5 29 Q5.5 28 4.5 24 Z" fill="#0b0b0b"/><path d="M8 20.5 L8.5 15 Q9.5 11 11.5 12 L12.5 14 L11.5 21.5 Z" fill="#5a5a5a"/><path d="M15.8 12 L21 12 L21.5 16 L16 16 Z" fill="#8e8e8e"/><ellipse cx="17.9" cy="8.6" rx="3.7" ry="5.1" fill="#d2d2d2"/><path d="M13.6 9.5 Q12 0.8 17.7 0.5 Q23.4 0.6 22.6 7.5 Q21.6 3.8 17.7 3.8 Q15 4.2 14.6 9.5 Z" fill="#111"/><path d="M18 17 L23 17 L22 33 L19.7 33 Z" fill="#ececec"/><path d="M17.5 15.6 L20.2 16.8 L23 15.4 L23 18 L20.2 17.2 L17.5 18.2 Z" fill="#000"/></svg></div>
<div class="a nm" style="top:356.5px">qq123456 <span style="margin-left:1.5px">知府</span></div>
<div class="a tm" style="top:355.0px">12:41:06</div>
<div class="a bb" style="top:371.5px">987</div>
<div class="a av" style="top:416.2px"><svg width="33" height="33" viewBox="0 0 33 33"><defs><linearGradient id="ag" x1="0" y1="0" x2="0" y2="1"><stop offset="0" stop-color="#4e4e4e"/><stop offset=".4" stop-color="#666"/><stop offset=".41" stop-color="#9c9c9c"/><stop offset="1" stop-color="#a4a4a4"/></linearGradient></defs><rect width="33" height="33" fill="url(#ag)"/><path d="M4.5 24 Q4 20 6.5 18.5 L9.5 13.5 L13 13 L15.5 15 L23 15.5 L25 19 L26 25.5 L33 26.5 L33 31 L26 31.5 L25 33 L9.5 33 L9.5 29 Q5.5 28 4.5 24 Z" fill="#0b0b0b"/><path d="M8 20.5 L8.5 15 Q9.5 11 11.5 12 L12.5 14 L11.5 21.5 Z" fill="#5a5a5a"/><path d="M15.8 12 L21 12 L21.5 16 L16 16 Z" fill="#8e8e8e"/><ellipse cx="17.9" cy="8.6" rx="3.7" ry="5.1" fill="#d2d2d2"/><path d="M13.6 9.5 Q12 0.8 17.7 0.5 Q23.4 0.6 22.6 7.5 Q21.6 3.8 17.7 3.8 Q15 4.2 14.6 9.5 Z" fill="#111"/><path d="M18 17 L23 17 L22 33 L19.7 33 Z" fill="#ececec"/><path d="M17.5 15.6 L20.2 16.8 L23 15.4 L23 18 L20.2 17.2 L17.5 18.2 Z" fill="#000"/></svg></div>
<div class="a nm" style="top:413.2px">qq123456 <span style="margin-left:1.5px">知府</span></div>
<div class="a tm" style="top:411.7px">12:52:53</div>
<div class="a bb" style="top:428.2px">98715</div>
<div class="a av" style="top:472.9px"><svg width="33" height="33" viewBox="0 0 33 33"><defs><linearGradient id="ag" x1="0" y1="0" x2="0" y2="1"><stop offset="0" stop-color="#4e4e4e"/><stop offset=".4" stop-color="#666"/><stop offset=".41" stop-color="#9c9c9c"/><stop offset="1" stop-color="#a4a4a4"/></linearGradient></defs><rect width="33" height="33" fill="url(#ag)"/><path d="M4.5 24 Q4 20 6.5 18.5 L9.5 13.5 L13 13 L15.5 15 L23 15.5 L25 19 L26 25.5 L33 26.5 L33 31 L26 31.5 L25 33 L9.5 33 L9.5 29 Q5.5 28 4.5 24 Z" fill="#0b0b0b"/><path d="M8 20.5 L8.5 15 Q9.5 11 11.5 12 L12.5 14 L11.5 21.5 Z" fill="#5a5a5a"/><path d="M15.8 12 L21 12 L21.5 16 L16 16 Z" fill="#8e8e8e"/><ellipse cx="17.9" cy="8.6" rx="3.7" ry="5.1" fill="#d2d2d2"/><path d="M13.6 9.5 Q12 0.8 17.7 0.5 Q23.4 0.6 22.6 7.5 Q21.6 3.8 17.7 3.8 Q15 4.2 14.6 9.5 Z" fill="#111"/><path d="M18 17 L23 17 L22 33 L19.7 33 Z" fill="#ececec"/><path d="M17.5 15.6 L20.2 16.8 L23 15.4 L23 18 L20.2 17.2 L17.5 18.2 Z" fill="#000"/></svg></div>
<div class="a nm" style="top:469.9px">qq123456 <span style="margin-left:1.5px">知府</span></div>
<div class="a tm" style="top:468.4px">13:02:58</div>
<div class="a bb" style="top:484.9px">36</div>
<div class="a av" style="top:529.6px"><svg width="33" height="33" viewBox="0 0 33 33"><defs><linearGradient id="ag" x1="0" y1="0" x2="0" y2="1"><stop offset="0" stop-color="#4e4e4e"/><stop offset=".4" stop-color="#666"/><stop offset=".41" stop-color="#9c9c9c"/><stop offset="1" stop-color="#a4a4a4"/></linearGradient></defs><rect width="33" height="33" fill="url(#ag)"/><path d="M4.5 24 Q4 20 6.5 18.5 L9.5 13.5 L13 13 L15.5 15 L23 15.5 L25 19 L26 25.5 L33 26.5 L33 31 L26 31.5 L25 33 L9.5 33 L9.5 29 Q5.5 28 4.5 24 Z" fill="#0b0b0b"/><path d="M8 20.5 L8.5 15 Q9.5 11 11.5 12 L12.5 14 L11.5 21.5 Z" fill="#5a5a5a"/><path d="M15.8 12 L21 12 L21.5 16 L16 16 Z" fill="#8e8e8e"/><ellipse cx="17.9" cy="8.6" rx="3.7" ry="5.1" fill="#d2d2d2"/><path d="M13.6 9.5 Q12 0.8 17.7 0.5 Q23.4 0.6 22.6 7.5 Q21.6 3.8 17.7 3.8 Q15 4.2 14.6 9.5 Z" fill="#111"/><path d="M18 17 L23 17 L22 33 L19.7 33 Z" fill="#ececec"/><path d="M17.5 15.6 L20.2 16.8 L23 15.4 L23 18 L20.2 17.2 L17.5 18.2 Z" fill="#000"/></svg></div>
<div class="a nm" style="top:526.6px">qq123456 <span style="margin-left:1.5px">知府</span></div>
<div class="a tm" style="top:525.1px">13:03:14</div>
<div class="a bb" style="top:541.6px">9321</div>
<div class="a av" style="top:586.3px"><svg width="33" height="33" viewBox="0 0 33 33"><defs><linearGradient id="ag" x1="0" y1="0" x2="0" y2="1"><stop offset="0" stop-color="#4e4e4e"/><stop offset=".4" stop-color="#666"/><stop offset=".41" stop-color="#9c9c9c"/><stop offset="1" stop-color="#a4a4a4"/></linearGradient></defs><rect width="33" height="33" fill="url(#ag)"/><path d="M4.5 24 Q4 20 6.5 18.5 L9.5 13.5 L13 13 L15.5 15 L23 15.5 L25 19 L26 25.5 L33 26.5 L33 31 L26 31.5 L25 33 L9.5 33 L9.5 29 Q5.5 28 4.5 24 Z" fill="#0b0b0b"/><path d="M8 20.5 L8.5 15 Q9.5 11 11.5 12 L12.5 14 L11.5 21.5 Z" fill="#5a5a5a"/><path d="M15.8 12 L21 12 L21.5 16 L16 16 Z" fill="#8e8e8e"/><ellipse cx="17.9" cy="8.6" rx="3.7" ry="5.1" fill="#d2d2d2"/><path d="M13.6 9.5 Q12 0.8 17.7 0.5 Q23.4 0.6 22.6 7.5 Q21.6 3.8 17.7 3.8 Q15 4.2 14.6 9.5 Z" fill="#111"/><path d="M18 17 L23 17 L22 33 L19.7 33 Z" fill="#ececec"/><path d="M17.5 15.6 L20.2 16.8 L23 15.4 L23 18 L20.2 17.2 L17.5 18.2 Z" fill="#000"/></svg></div>
<div class="a nm" style="top:583.3px">qq123456 <span style="margin-left:1.5px">知府</span></div>
<div class="a tm" style="top:581.8px">13:05:25</div>
<div class="a bb" style="top:598.3px">663</div>
<div class="a tm" style="top:638.5px;left:135px"></div>
<div class="a" style="left:1px;top:641px;width:267px;height:65px;background:#fff"></div>
<div class="a" style="left:0;top:656.5px;width:268px;height:1px;background:#ccc"></div>
<div class="a" style="left:0;top:680.5px;width:268px;height:1px;background:#ddd"></div>
<svg class="a" style="left:10px;top:658.5px" width="20.5" height="20.5" viewBox="0 0 20 20"><circle cx="10" cy="10" r="10" fill="#f5c022"/><path d="M5.3 8 Q7 5.6 8.7 8" stroke="#4a3a1a" stroke-width="1.3" fill="none"/><path d="M11.3 8 Q13 5.6 14.7 8" stroke="#4a3a1a" stroke-width="1.3" fill="none"/><path d="M4.5 11 Q10 17.5 15.5 11 Z" fill="#5a2a10"/><path d="M6.5 13.8 Q10 16 13.5 13.8 Q10 16.8 6.5 13.8Z" fill="#e0606a"/></svg>
<div class="a" style="left:4.5px;top:686px;width:218px;height:30px;border:1px solid #c8d0e0;border-radius:3px;background:#fff"></div>
<div class="a" style="left:15px;top:692px;font-size:11px;color:#8a93a8;line-height:14px">输入内容</div>
<div class="a" style="left:228.5px;top:686px;width:45px;height:30px;background:#6a3bb6;border-radius:3px;color:#fff;font-size:12px;line-height:14px;padding:6px 0 0 9px">发送</div>
<div class="a" style="left:258.8px;top:77px;width:14px;height:19px;background:#2196f3;border-radius:3px"><svg class="a" style="left:2px;top:4px" width="10" height="11" viewBox="0 0 10 11"><circle cx="6" cy="7" r="3.3" stroke="#fff" stroke-width="1.6" fill="none"/><path d="M3 1 L6 4" stroke="#fff" stroke-width="1.6"/></svg></div>
</div>
</body></html>
